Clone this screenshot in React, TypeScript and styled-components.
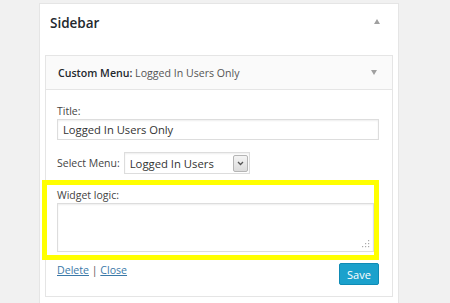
import React from 'react';
import styled, { createGlobalStyle } from 'styled-components';

const GlobalStyle = createGlobalStyle`
  body {
    margin: 0;
    background: #f1f1f1;
    font-family: "Open Sans", "Liberation Sans", sans-serif;
    color: #444;
  }
`;

const Page = styled.div`
  padding: 3px 0 0 39px;
  height: 300px;
  overflow: hidden;
`;

const SidebarPanel = styled.div`
  width: 358px;
  background: #fff;
  border: 1px solid #e5e5e5;
  border-bottom: none;
  min-height: 320px;
`;

const SidebarHead = styled.div`
  display: flex;
  align-items: center;
  justify-content: space-between;
  height: 37px;
  padding: 0 18px 0 10px;
  font-size: 13.5px;
  font-weight: 600;
  color: #23282d;
`;

const Arrow = styled.span<{ $up?: boolean }>`
  width: 0;
  height: 0;
  border-left: 3.5px solid transparent;
  border-right: 3.5px solid transparent;
  ${(p) => (p.$up ? 'border-bottom: 5px solid #a0a0a0;' : 'border-top: 5px solid #a0a0a0;')}
  margin-bottom: ${(p) => (p.$up ? '2px' : '0')};
`;

const SidebarBody = styled.div`
  padding: 14px 5px 0;
`;

const Widget = styled.div`
  border: 1px solid #e5e5e5;
  background: #fff;
`;

const WidgetTop = styled.div`
  display: flex;
  align-items: center;
  justify-content: space-between;
  height: 33px;
  padding: 0 15px 0 12px;
  background: #fafafa;
  border-bottom: 1px solid #e5e5e5;
  font-size: 10.6px;
  color: #23282d;

  b {
    font-weight: 600;
  }

  span.title {
    color: #555;
  }
`;

const WidgetInside = styled.div`
  padding: 13px 13px 11px 11px;
`;

const Label = styled.label`
  display: block;
  font-size: 10.5px;
  line-height: 16px;
  color: #444;
`;

const TextInput = styled.div`
  box-sizing: border-box;
  height: 21px;
  border: 1px solid #ddd;
  box-shadow: inset 0 1px 2px rgba(0, 0, 0, 0.07);
  padding: 0 5px;
  font-size: 11.2px;
  line-height: 19px;
  color: #333;
`;

const SelectRow = styled.div`
  display: flex;
  align-items: center;
  gap: 4px;
  margin-top: 12px;
`;

const Select = styled.div`
  box-sizing: border-box;
  display: flex;
  align-items: center;
  justify-content: space-between;
  width: 126px;
  height: 22px;
  border: 1px solid #ddd;
  box-shadow: inset 0 1px 2px rgba(0, 0, 0, 0.07);
  padding: 0 1px 0 5px;
  font-size: 11.3px;
  color: #333;
`;

const DropButton = styled.span`
  box-sizing: border-box;
  width: 15px;
  height: 17px;
  display: flex;
  align-items: center;
  justify-content: center;
  background: linear-gradient(#f4f4f4, #dcdcdc);
  border: 1px solid #b5b5b5;
  border-radius: 2px;
`;

const Highlight = styled.div`
  margin: 6px 0 0 -15px;
  border: 5px solid #ffff00;
  padding: 2px 0 3px 10px;
`;

const TextArea = styled.div`
  position: relative;
  box-sizing: border-box;
  height: 49px;
  border: 1px solid #ddd;
  box-shadow: inset 0 1px 2px rgba(0, 0, 0, 0.07);
`;

const Grip = styled.svg`
  position: absolute;
  right: 3px;
  bottom: 3px;
`;

const Controls = styled.div`
  display: flex;
  justify-content: space-between;
  align-items: flex-start;
`;

const Links = styled.div`
  padding-top: 2px;
  font-size: 10.6px;
  line-height: 16px;
  color: #555;

  a {
    color: #3b79a8;
    text-decoration: underline;
  }
`;

const SaveButton = styled.button`
  margin-top: 3px;
  width: 40px;
  height: 22px;
  padding: 0;
  background: #1ba1cc;
  border: 1px solid #0f8bb5;
  border-radius: 2px;
  color: #fff;
  font-family: inherit;
  font-size: 11px;
`;

export default function App() {
  return (
    <>
      <GlobalStyle />
      <Page>
        <SidebarPanel>
          <SidebarHead>
            <span>Sidebar</span>
            <Arrow $up />
          </SidebarHead>
          <SidebarBody>
            <Widget>
              <WidgetTop>
                <span>
                  <b>Custom Menu:</b> <span className="title">Logged In Users Only</span>
                </span>
                <Arrow />
              </WidgetTop>
              <WidgetInside>
                <Label>Title:</Label>
                <TextInput>Logged In Users Only</TextInput>
                <SelectRow>
                  <Label>Select Menu:</Label>
                  <Select>
                    <span>Logged In Users</span>
                    <DropButton>
                      <svg width="7" height="5" viewBox="0 0 7 5">
                        <path d="M1 1l2.5 2.5L6 1" fill="none" stroke="#555" strokeWidth="1.3" />
                      </svg>
                    </DropButton>
                  </Select>
                </SelectRow>
                <Highlight>
                  <Label>Widget logic:</Label>
                  <TextArea>
                    <Grip width="8" height="8" viewBox="0 0 8 8">
                      <g fill="#aaa">
                        <rect x="6" y="0" width="1.2" height="1.2" />
                        <rect x="3" y="3" width="1.2" height="1.2" />
                        <rect x="6" y="3" width="1.2" height="1.2" />
                        <rect x="0" y="6" width="1.2" height="1.2" />
                        <rect x="3" y="6" width="1.2" height="1.2" />
                        <rect x="6" y="6" width="1.2" height="1.2" />
                      </g>
                    </Grip>
                  </TextArea>
                </Highlight>
                <Controls>
                  <Links>
                    <a>Delete</a> | <a>Close</a>
                  </Links>
                  <SaveButton>Save</SaveButton>
                </Controls>
              </WidgetInside>
            </Widget>
          </SidebarBody>
        </SidebarPanel>
      </Page>
    </>
  );
}
